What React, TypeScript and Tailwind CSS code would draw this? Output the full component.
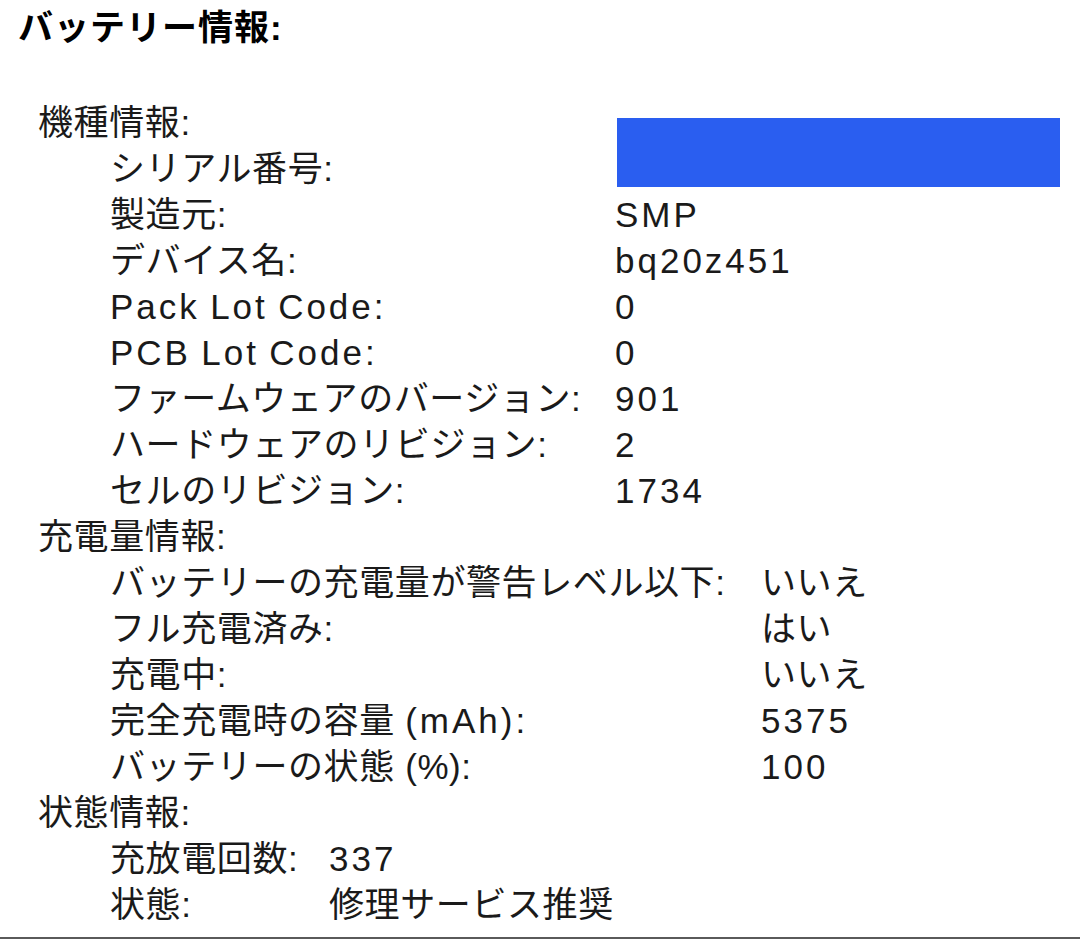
import React from 'react';

type Row = { label: string; value: string };

const sections: { title: string; labelWidth: string; rows: Row[] }[] = [
  {
    title: '機種情報:',
    labelWidth: 'w-[505px]',
    rows: [
      { label: 'シリアル番号:', value: '' },
      { label: '製造元:', value: 'SMP' },
      { label: 'デバイス名:', value: 'bq20z451' },
      { label: 'Pack Lot Code:', value: '0' },
      { label: 'PCB Lot Code:', value: '0' },
      { label: 'ファームウェアのバージョン:', value: '901' },
      { label: 'ハードウェアのリビジョン:', value: '2' },
      { label: 'セルのリビジョン:', value: '1734' },
    ],
  },
  {
    title: '充電量情報:',
    labelWidth: 'w-[651px]',
    rows: [
      { label: 'バッテリーの充電量が警告レベル以下:', value: 'いいえ' },
      { label: 'フル充電済み:', value: 'はい' },
      { label: '充電中:', value: 'いいえ' },
      { label: '完全充電時の容量 (mAh):', value: '5375' },
      { label: 'バッテリーの状態 (%):', value: '100' },
    ],
  },
  {
    title: '状態情報:',
    labelWidth: 'w-[219px]',
    rows: [
      { label: '充放電回数:', value: '337' },
      { label: '状態:', value: '修理サービス推奨' },
    ],
  },
];

// latin runs are set wider than the japanese ones, like the mac system font
function T({ text }: { text: string }) {
  const parts = text.match(/[A-Za-z0-9()%]+|[^A-Za-z0-9()%]+/g) || [];
  return (
    <>
      {parts.map((p, i) =>
        /[A-Za-z0-9]/.test(p) ? (
          <span key={i} className="tracking-[3px]">{p}</span>
        ) : (
          <span key={i}>{p}</span>
        )
      )}
    </>
  );
}

export default function App() {
  return (
    <div
      className="w-[1080px] h-[939px] bg-white text-[#1a1a1a] text-[35px] leading-[46px] tracking-[0.6px] overflow-hidden flex flex-col"
      style={{ fontFamily: '"Liberation Sans", "Noto Sans CJK JP", sans-serif' }}
    >
      <h1 className="pl-[18px] mt-[5px] font-bold text-black tracking-[1px]">バッテリー情報:</h1>

      <div className="mt-[49px] flex flex-col">
        {sections.map((s, i) => (
          <div key={s.title} className="relative flex flex-col">
            <div className="pl-[38px]">{s.title}</div>
            {s.rows.map((r) => (
              <div key={r.label} className="flex pl-[110px] whitespace-nowrap">
                <div className={`${s.labelWidth} shrink-0`}>
                  <T text={r.label} />
                </div>
                <div>
                  <T text={r.value} />
                </div>
              </div>
            ))}
            {/* redacted serial */}
            {i === 0 && (
              <div className="absolute left-[617px] top-[18px] w-[443px] h-[69px] bg-[#2a5ef0]" />
            )}
          </div>
        ))}
      </div>

      <div className="mt-auto border-t-2 border-[#5a5a5a]" />
    </div>
  );
}
